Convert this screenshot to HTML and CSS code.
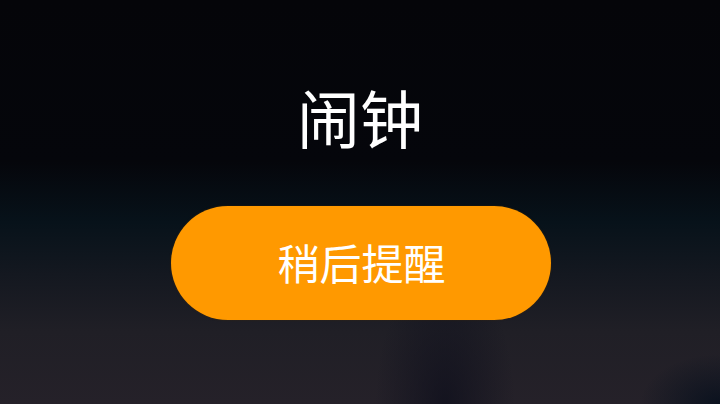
FILE: index.html
```html
<!DOCTYPE html>
<html lang="zh-CN">
<head>
  <meta charset="UTF-8">
  <title>闹钟</title>
  <link rel="stylesheet" href="styles.css">
</head>
<body>

<div class="alarm">
  <h1 class="alarm-title">闹钟</h1>
  <button class="snooze-btn">稍后提醒</button>
</div>

</body>
</html>
```

FILE: styles.css
```css
html, body {
  margin: 0;
  height: 100%;
}

body {
  font-family: "Noto Sans CJK SC", "Noto Sans", sans-serif;
  background:
    radial-gradient(ellipse 70px 140px at 445px 404px, rgba(14, 15, 28, 0.75), rgba(14, 15, 28, 0) 100%),
    radial-gradient(ellipse 80px 50px at 720px 404px, rgba(4, 14, 28, 0.8), rgba(4, 14, 28, 0) 100%),
    linear-gradient(180deg, #050509 0%, #05060b 40%, #07121a 55%, #141820 68%, #201f26 82%, #252129 100%);
  overflow: hidden;
}

.alarm {
  display: flex;
  flex-direction: column;
  align-items: center;
  padding-top: 73px;
}

.alarm-title {
  margin: 0;
  color: #fff;
  font-size: 63px;
  font-weight: 400;
  line-height: 86px;
}

.snooze-btn {
  margin-top: 47px;
  margin-left: 1px;
  width: 380px;
  height: 114px;
  border: none;
  border-radius: 57px;
  background: #ff9900;
  color: #fff;
  font-family: inherit;
  font-size: 42px;
  font-weight: 400;
  padding: 0 0 4px 2px;
  box-shadow: 0 0 2px rgba(80, 50, 0, 0.6);
}
```
